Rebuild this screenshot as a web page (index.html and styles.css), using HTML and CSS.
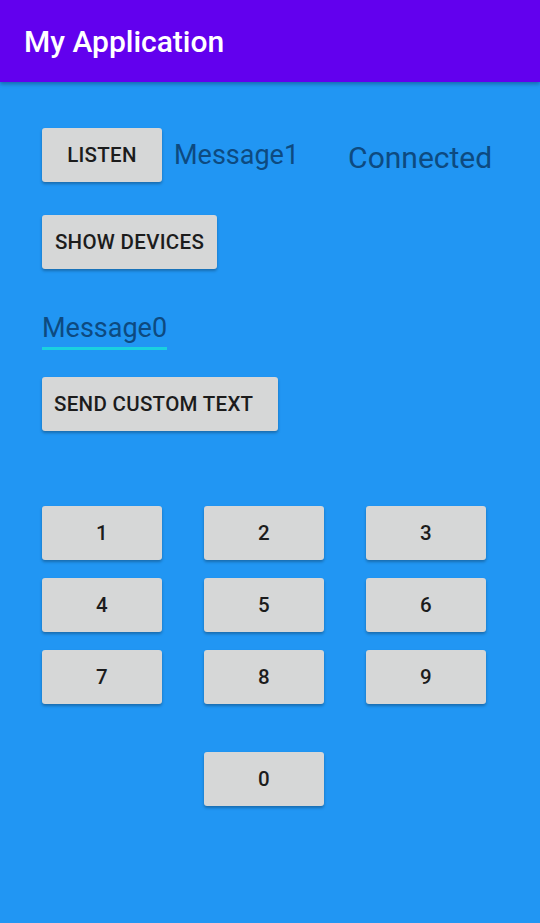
FILE: index.html
```html
<!DOCTYPE html>
<html>
<head>
<meta charset="utf-8">
<link rel="stylesheet" href="styles.css">
</head>
<body>
<div class="appbar"><span class="title">My Application</span></div>
<div class="content">
  <div class="row1">
    <button class="btn btn-listen">LISTEN</button>
    <span class="msg1">Message1</span>
    <span class="status">Connected</span>
  </div>
  <div class="row2">
    <button class="btn btn-show">SHOW DEVICES</button>
  </div>
  <div class="edit"><span class="edit-text">Message0</span></div>
  <div class="row3">
    <button class="btn btn-send">SEND CUSTOM TEXT</button>
  </div>
  <div class="pad">
    <button class="btn num">1</button>
    <button class="btn num">2</button>
    <button class="btn num">3</button>
    <button class="btn num">4</button>
    <button class="btn num">5</button>
    <button class="btn num">6</button>
    <button class="btn num">7</button>
    <button class="btn num">8</button>
    <button class="btn num">9</button>
  </div>
  <div class="zero-row">
    <button class="btn num">0</button>
  </div>
</div>
</body>
</html>
```
FILE: styles.css
```css
html, body {
  margin: 0;
  padding: 0;
}
body {
  width: 540px;
  height: 923px;
  background: #2196f3;
  font-family: Roboto, "Noto Sans", sans-serif;
  overflow: hidden;
}
.appbar {
  height: 82px;
  background: #6200ee;
  display: flex;
  align-items: center;
  padding-left: 24px;
  box-shadow: 0 2px 4px rgba(0,0,0,0.3);
  position: relative;
}
.title {
  color: #ffffff;
  font-size: 30px;
  font-weight: 500;
}
.content {
  padding-left: 42px;
}
.btn {
  height: 54px;
  border: none;
  border-radius: 3px;
  background: #d6d7d7;
  color: #1c1c1c;
  font-family: Roboto, "Noto Sans", sans-serif;
  font-size: 20.5px;
  font-weight: 500;
  padding: 0 12px;
  box-shadow: 0 2px 3px rgba(0,0,0,0.28);
  letter-spacing: 0.3px;
  margin: 0;
  white-space: nowrap;
}
.row1 {
  margin-top: 46px;
  display: flex;
  align-items: center;
  height: 54px;
}
.btn-listen {
  width: 120px;
}
.msg1 {
  margin-left: 12px;
  font-size: 27px;
  color: #0d4a80;
}
.status {
  margin-left: 49px;
  font-size: 30px;
  color: #0d4a80;
  margin-top: 5px;
}
.row2 {
  margin-top: 33px;
  height: 54px;
}
.btn-show {
  width: 175px;
}
.edit {
  margin-top: 43px;
  display: inline-block;
  border-bottom: 3px solid #1ad1e0;
  padding-bottom: 2px;
}
.edit-text {
  display: block;
  font-size: 27px;
  color: #0d4a80;
  line-height: 33px;
}
.row3 {
  margin-top: 27px;
  height: 54px;
}
.btn-send {
  width: 236px;
  text-align: left;
}
.pad {
  margin-top: 75px;
  display: grid;
  grid-template-columns: 120px 120px 120px;
  column-gap: 42px;
  row-gap: 18px;
}
.num {
  width: 120px;
}
.zero-row {
  margin-top: 48px;
  padding-left: 162px;
}
```
